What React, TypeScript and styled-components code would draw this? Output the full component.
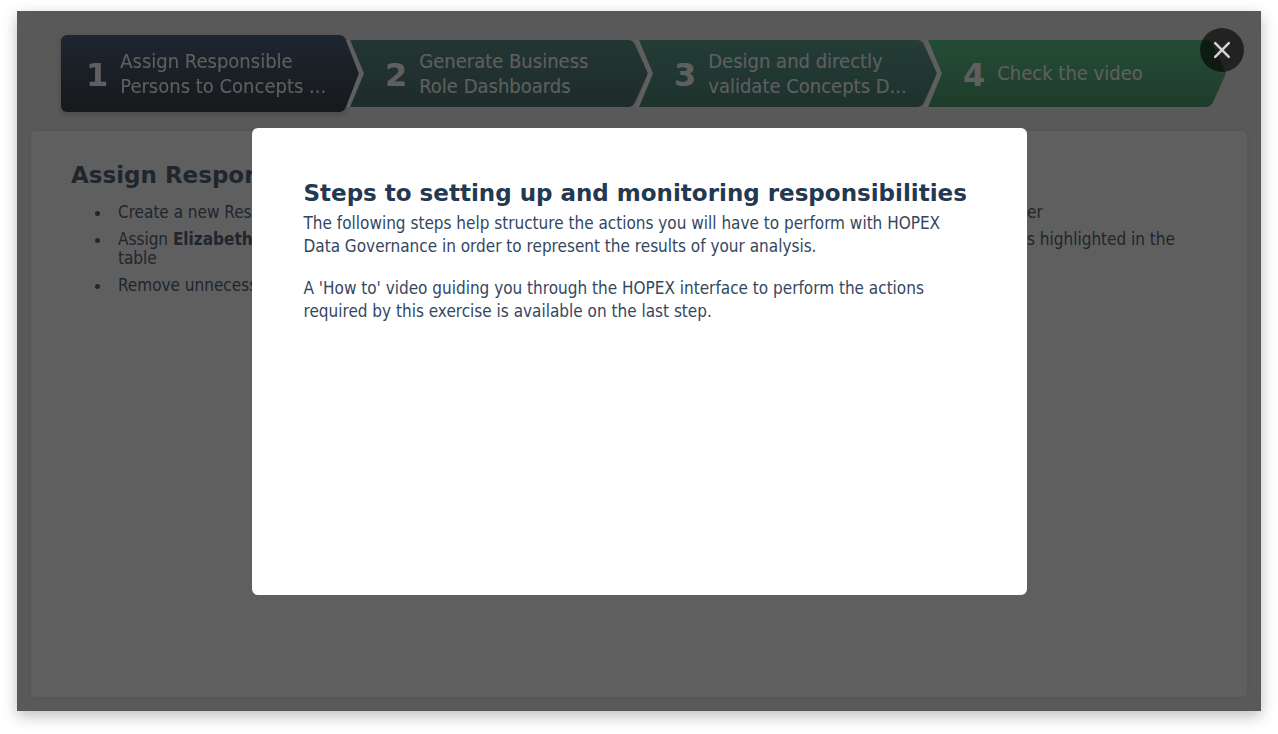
import React from "react";
import styled, { createGlobalStyle } from "styled-components";

const GlobalStyle = createGlobalStyle`
  * { box-sizing: border-box; }
  body {
    margin: 0;
    background: #fff;
    color: #34475f;
    font: 17px/20px "DejaVu Sans Condensed", "DejaVu Sans", Verdana, sans-serif;
  }
`;

const Page = styled.div`
  min-height: 100vh;
  padding: 11px 17px 23px;
  display: flex;
`;

const Frame = styled.div`
  position: relative;
  flex: 1;
  display: flex;
  flex-direction: column;
  gap: 19px;
  padding: 24px 14px 14px;
  background: #efefef;
  box-shadow: 0 5px 14px rgba(0, 0, 0, 0.26);
`;

const StepList = styled.ol`
  list-style: none;
  margin: 0;
  padding: 0 21px 0 30px;
  height: 77px;
  display: flex;
  align-items: center;
`;

const StepItem = styled.li<{ $first?: boolean }>`
  position: relative;
  flex: 1;
  min-width: 0;
  height: ${(p) => (p.$first ? 77 : 67)}px;
  margin-left: ${(p) => (p.$first ? 0 : -9)}px;
  filter: ${(p) => (p.$first ? "drop-shadow(0 2px 3px rgba(0, 0, 0, 0.2))" : "none")};

  &::before {
    content: "";
    display: ${(p) => (p.$first ? "none" : "block")};
    position: absolute;
    top: 0;
    bottom: 0;
    left: -4px;
    width: 18px;
    background: #fff;
    clip-path: polygon(0 0, 5px 0, 100% 50%, 5px 100%, 0 100%, 13px 50%);
  }
`;

const StepButton = styled.button<{ $from: string; $to: string; $first?: boolean }>`
  width: 100%;
  height: 100%;
  border: 0;
  margin: 0;
  padding: 0 20px 0 ${(p) => (p.$first ? 25 : 35)}px;
  display: flex;
  align-items: center;
  gap: 12px;
  color: #fff;
  text-align: left;
  font-family: inherit;
  border-radius: ${(p) => (p.$first ? "6px 0 0 6px" : "0")};
  background: linear-gradient(${(p) => p.$from}, ${(p) => p.$to});
  clip-path: polygon(
    0 0, calc(100% - 19px) 0, calc(100% - 16px) 1px, calc(100% - 14px) 3px, calc(100% - 12px) 7px,
    100% 50%,
    calc(100% - 12px) calc(100% - 7px), calc(100% - 14px) calc(100% - 3px),
    calc(100% - 16px) calc(100% - 1px), calc(100% - 19px) 100%, 0 100%,
    ${(p) => (p.$first ? "0" : "14px")} 50%
  );
`;

const StepNumber = styled.span`
  padding-top: 2px;
  font: bold 32px/40px "DejaVu Sans", Verdana, sans-serif;
`;

const StepLabel = styled.span`
  font-size: 20px;
  line-height: 25px;
  white-space: pre;
`;

const Panel = styled.main`
  flex: 1;
  padding: 32px 40px;
  color: #566679;
  background: #fff;
  border-radius: 5px;
  box-shadow: 0 0 6px rgba(0, 0, 0, 0.08);
`;

const Title = styled.h2`
  margin: 0;
  font: bold 23px/24px "DejaVu Sans", Verdana, sans-serif;
`;

const TaskList = styled.ul`
  margin: 16px 0 0;
  padding: 0 0 0 41px;
  display: flex;
  flex-direction: column;
  gap: 8px;
  line-height: 19px;

  li {
    padding-left: 6px;
  }
`;

const TaskLine = styled.div`
  display: grid;
  grid-template-columns: 1fr 180px;
  white-space: nowrap;
`;

const Overlay = styled.div`
  position: absolute;
  inset: 0;
  display: flex;
  align-items: center;
  justify-content: center;
  background: rgba(0, 0, 0, 0.627);
`;

const Dialog = styled.section`
  width: 775px;
  max-width: 90%;
  min-height: 467px;
  padding: 50px 60px 50px 52px;
  background: #fff;
  border-radius: 6px;
`;

const Paragraph = styled.p`
  margin: 0 0 19px;
  line-height: 23px;
`;

const DialogTitle = styled(Title)`
  margin-bottom: 4px;
  line-height: 30px;
  white-space: nowrap;
  color: #24384f;
`;

const CloseButton = styled.button`
  position: absolute;
  top: 17px;
  right: 17px;
  width: 44px;
  height: 44px;
  padding: 0;
  border: 0;
  border-radius: 50%;
  display: grid;
  place-items: center;
  background: rgba(0, 0, 0, 0.62);
  color: #d4d4d4;
`;

const steps = [
  { label: "Assign Responsible\nPersons to Concepts ...", from: "#506681", to: "#3e434b" },
  { label: "Generate Business\nRole Dashboards", from: "#5e918b", to: "#507673" },
  { label: "Design and directly\nvalidate Concepts D...", from: "#60a391", to: "#538579" },
  { label: "Check the video", from: "#60cc8e", to: "#56a173" },
];

export default function App() {
  return (
    <Page>
      <GlobalStyle />
      <Frame>
        <StepList>
          {steps.map((step, i) => (
            <StepItem key={step.label} $first={i === 0}>
              <StepButton type="button" $from={step.from} $to={step.to} $first={i === 0}>
                <StepNumber>{i + 1}</StepNumber>
                <StepLabel>{step.label}</StepLabel>
              </StepButton>
            </StepItem>
          ))}
        </StepList>
        <Panel>
          <Title>Assign Respon</Title>
          <TaskList>
            <li>
              <TaskLine>
                <span>Create a new Res</span>
                <span>er</span>
              </TaskLine>
            </li>
            <li>
              <TaskLine>
                <span>
                  Assign <b>Elizabeth</b>
                </span>
                <span>s highlighted in the</span>
              </TaskLine>
              table
            </li>
            <li>Remove unnecess</li>
          </TaskList>
        </Panel>
        <Overlay>
          <Dialog role="dialog" aria-modal="true" aria-labelledby="dialog-title">
            <DialogTitle id="dialog-title">Steps to setting up and monitoring responsibilities</DialogTitle>
            <Paragraph>
              The following steps help structure the actions you will have to perform with HOPEX
              Data Governance in order to represent the results of your analysis.
            </Paragraph>
            <Paragraph>
              A 'How to' video guiding you through the HOPEX interface to perform the actions
              required by this exercise is available on the last step.
            </Paragraph>
          </Dialog>
          <CloseButton type="button" aria-label="Close">
            <svg width="18" height="18" viewBox="0 0 18 18" fill="none" stroke="currentColor" strokeWidth="2.5" strokeLinecap="round">
              <path d="M2.2 2.2 15.8 15.8M15.8 2.2 2.2 15.8" />
            </svg>
          </CloseButton>
        </Overlay>
      </Frame>
    </Page>
  );
}
